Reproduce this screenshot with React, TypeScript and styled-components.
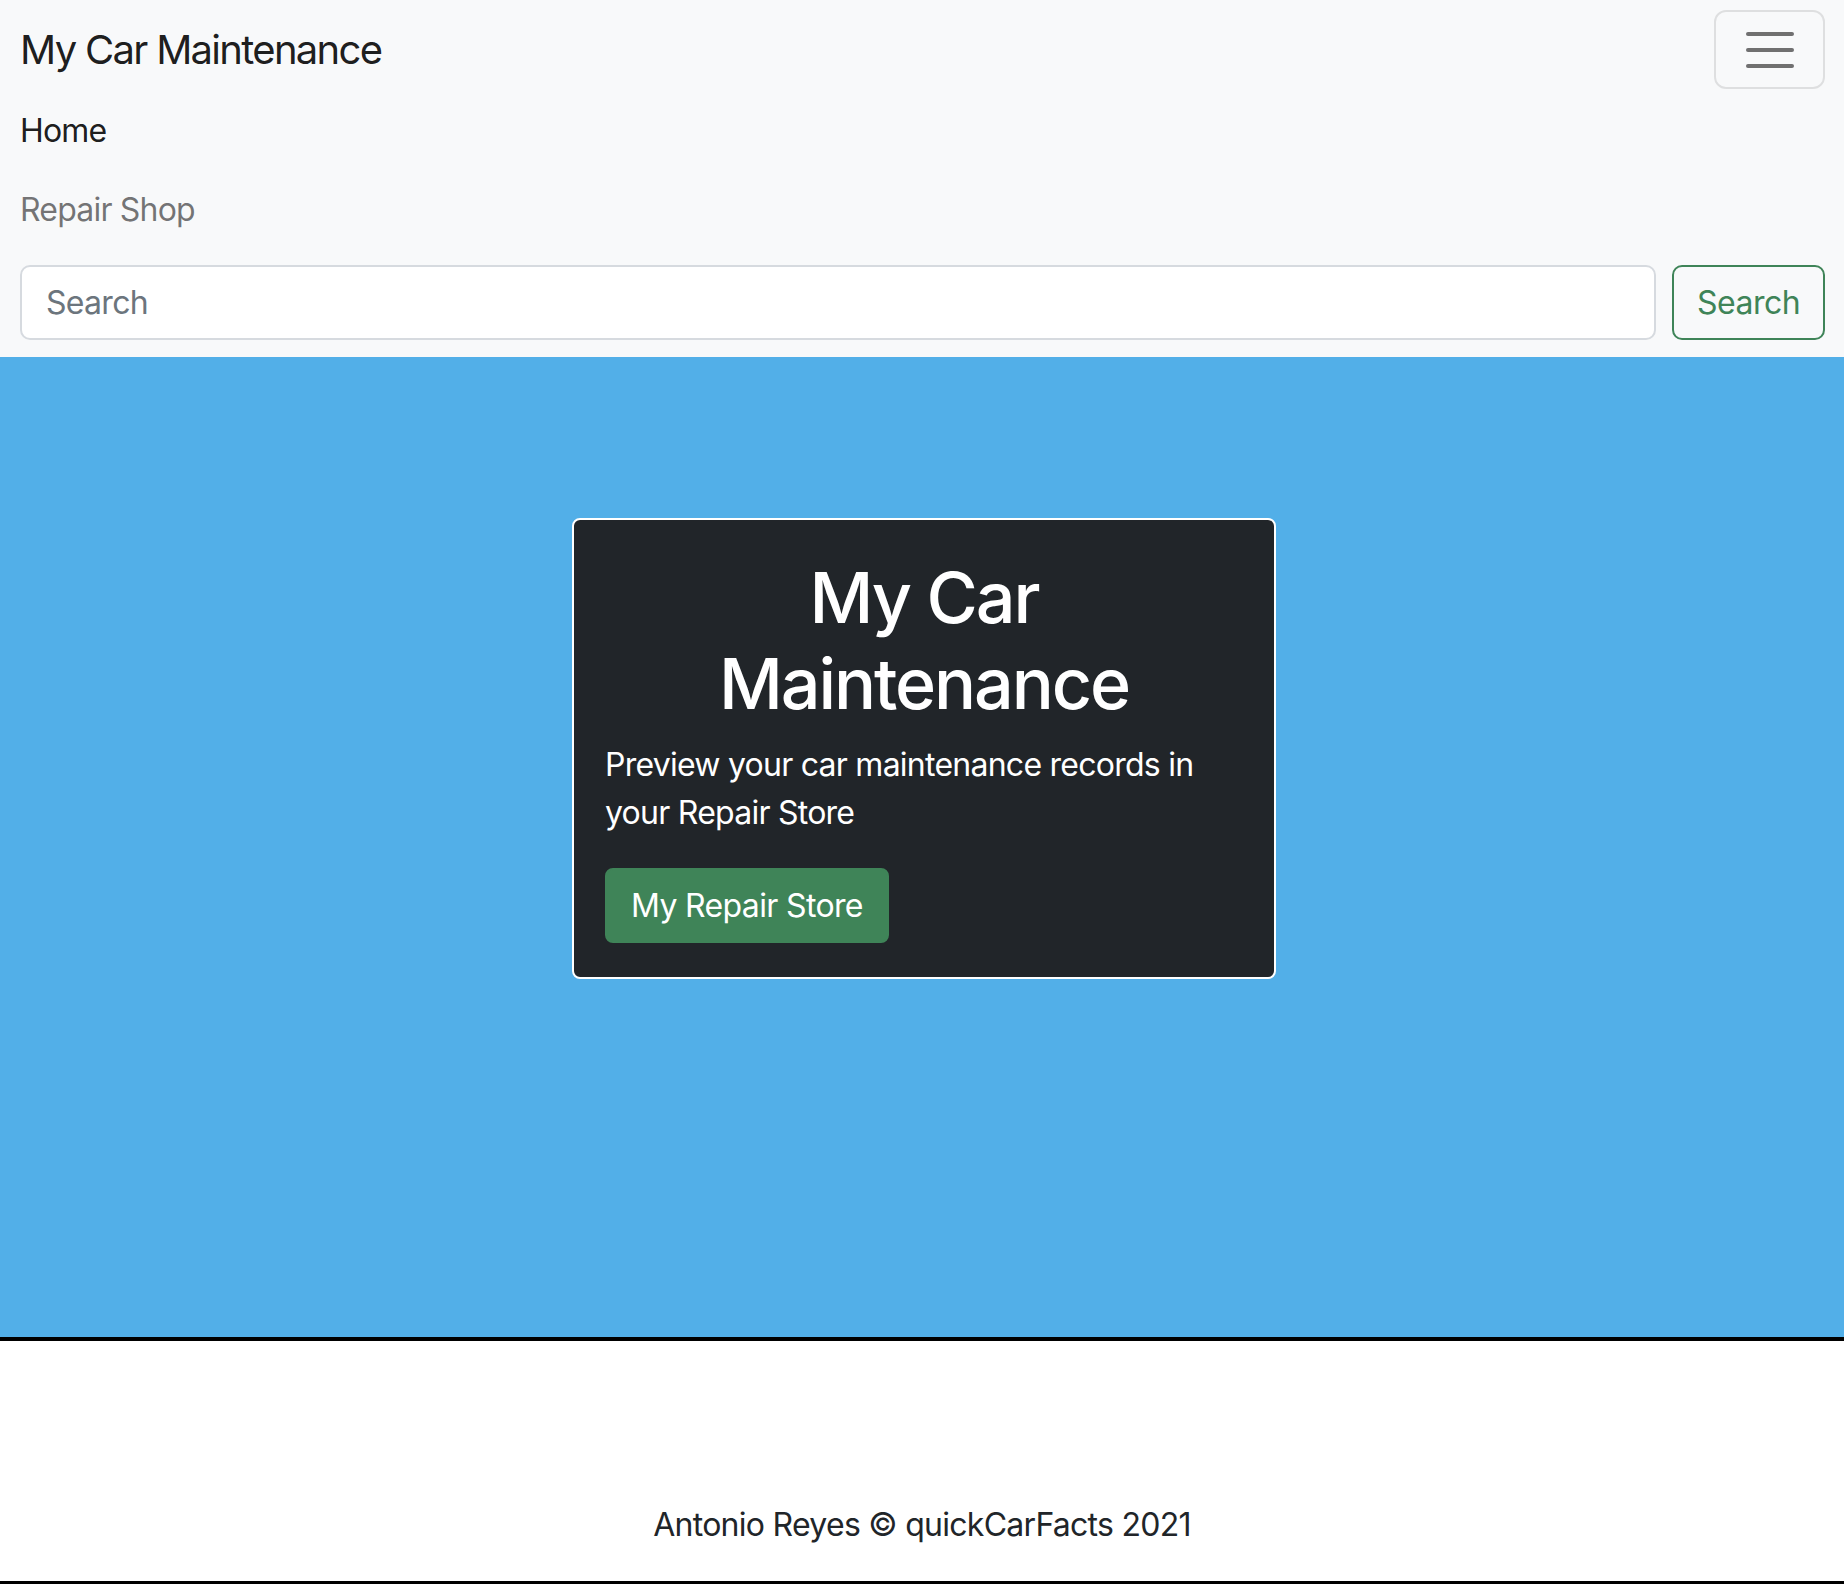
import React from "react";
import styled, { createGlobalStyle } from "styled-components";

const GlobalStyle = createGlobalStyle`
  *, *::before, *::after { box-sizing: border-box; }
  body {
    margin: 0;
    font-family: Inter, "Noto Sans", "Liberation Sans", sans-serif;
    color: #212529;
    background: #ffffff;
  }
`;

const Navbar = styled.nav`
  background: #f8f9fa;
  padding: 10px 19px 17px 20px;
  display: flex;
  flex-direction: column;
`;

const TopRow = styled.div`
  display: flex;
  align-items: center;
  justify-content: space-between;
`;

const Brand = styled.a`
  font-size: 40px;
  line-height: 60px;
  font-weight: 400;
  color: rgba(0, 0, 0, 0.9);
  text-decoration: none;
  letter-spacing: -1.7px;
`;

const Toggler = styled.button`
  width: 111px;
  height: 79px;
  border: 2px solid rgba(0, 0, 0, 0.1);
  border-radius: 12px;
  background: transparent;
  display: flex;
  align-items: center;
  justify-content: center;
  padding: 0;
  cursor: pointer;
`;

const NavList = styled.ul`
  list-style: none;
  margin: 2px 0 0;
  padding: 0;
  display: flex;
  flex-direction: column;
`;

const NavLink = styled.a<{ $active?: boolean }>`
  display: block;
  font-size: 32px;
  line-height: 48px;
  padding: 16px 0 15px;
  letter-spacing: -0.8px;
  color: ${(p) => (p.$active ? "rgba(0, 0, 0, 0.9)" : "rgba(0, 0, 0, 0.55)")};
  text-decoration: none;
`;

const SearchForm = styled.form`
  display: flex;
  gap: 16px;
  margin-top: 16px;
`;

const SearchInput = styled.input`
  flex: 1;
  height: 75px;
  border: 2px solid #d6dadf;
  border-radius: 10px;
  background: #ffffff;
  padding: 0 24px;
  font-family: inherit;
  font-size: 32px;
  letter-spacing: -0.7px;
  color: #212529;
  outline: none;
  &::placeholder {
    color: #6c757d;
  }
`;

const OutlineButton = styled.button`
  width: 153px;
  height: 75px;
  border: 2px solid #3f8458;
  border-radius: 10px;
  background: transparent;
  color: #3f8458;
  font-family: inherit;
  font-size: 32px;
  letter-spacing: -0.5px;
  padding: 0;
  cursor: pointer;
`;

const Hero = styled.main`
  background: #52afe8;
  height: 980px;
  padding-top: 161px;
  display: flex;
  flex-direction: column;
  align-items: center;
`;

const Card = styled.section`
  width: 704px;
  margin-left: 4px;
  background: #212529;
  border: 2px solid #ffffff;
  border-radius: 8px;
  padding: 35px 31px 34px;
  color: #ffffff;
`;

const Title = styled.h1`
  margin: 0 0 14px;
  font-size: 70px;
  line-height: 86px;
  font-weight: 500;
  text-align: center;
  letter-spacing: -2.1px;
`;

const Lead = styled.p`
  margin: 0 0 31px;
  font-size: 32px;
  line-height: 48px;
  letter-spacing: -0.75px;
`;

const PrimaryButton = styled.a`
  display: inline-flex;
  align-items: center;
  justify-content: center;
  height: 75px;
  padding: 0 24px;
  border: 2px solid #3f8458;
  border-radius: 8px;
  background: #3f8458;
  color: #ffffff;
  font-size: 32px;
  text-decoration: none;
  letter-spacing: -0.65px;
`;

const Footer = styled.footer`
  border-top: 4px solid #000000;
  border-bottom: 4px solid #000000;
  padding: 160px 0 32px;
  text-align: center;
  background: #ffffff;
`;

const FooterText = styled.p`
  margin: 0;
  font-size: 32px;
  line-height: 48px;
  color: #212529;
  letter-spacing: -0.72px;
`;

const HamburgerIcon = () => (
  <svg width="56" height="40" viewBox="0 0 56 40" aria-hidden="true">
    <g stroke="#707070" strokeWidth="4" strokeLinecap="round">
      <line x1="6" y1="4" x2="50" y2="4" />
      <line x1="6" y1="20" x2="50" y2="20" />
      <line x1="6" y1="36" x2="50" y2="36" />
    </g>
  </svg>
);

export default function App() {
  return (
    <>
      <GlobalStyle />
      <Navbar>
        <TopRow>
          <Brand href="#">My Car Maintenance</Brand>
          <Toggler type="button" aria-label="Toggle navigation">
            <HamburgerIcon />
          </Toggler>
        </TopRow>
        <NavList>
          <li>
            <NavLink href="#" $active>
              Home
            </NavLink>
          </li>
          <li>
            <NavLink href="#">Repair Shop</NavLink>
          </li>
        </NavList>
        <SearchForm onSubmit={(e) => e.preventDefault()}>
          <SearchInput type="search" placeholder="Search" aria-label="Search" />
          <OutlineButton type="submit">Search</OutlineButton>
        </SearchForm>
      </Navbar>
      <Hero>
        <Card>
          <Title>
            My Car
            <br />
            Maintenance
          </Title>
          <Lead>Preview your car maintenance records in your Repair Store</Lead>
          <PrimaryButton href="#">My Repair Store</PrimaryButton>
        </Card>
      </Hero>
      <Footer>
        <FooterText>Antonio Reyes © quickCarFacts 2021</FooterText>
      </Footer>
    </>
  );
}
